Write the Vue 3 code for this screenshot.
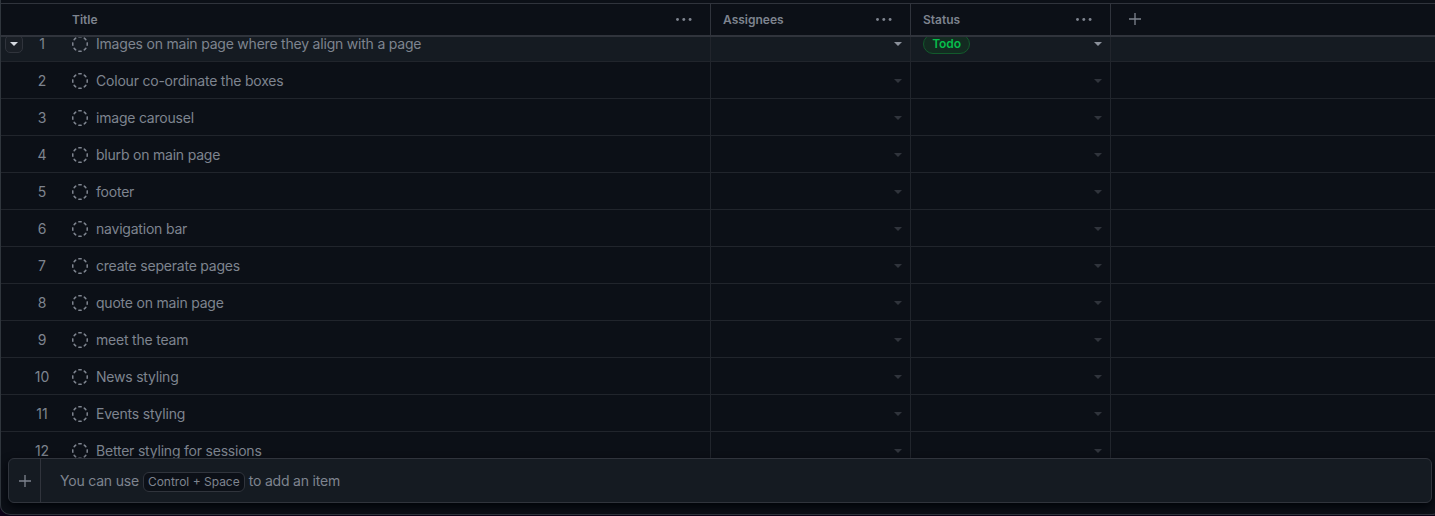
<script setup>
const titles = [
  'Images on main page where they align with a page',
  'Colour co-ordinate the boxes',
  'image carousel',
  'blurb on main page',
  'footer',
  'navigation bar',
  'create seperate pages',
  'quote on main page',
  'meet the team',
  'News styling',
  'Events styling',
  'Better styling for sessions',
]
const columns = ['Title', 'Assignees', 'Status']
</script>

<template>
  <div class="page">
    <div class="board">
      <div class="header">
        <div v-for="c in columns" :key="c" class="hcell">
          <span>{{ c }}</span>
          <svg class="dots" width="16" height="16" viewBox="0 0 16 16"><circle cx="1.5" cy="7.5" r="1.45" /><circle cx="7.8" cy="7.5" r="1.45" /><circle cx="14.1" cy="7.5" r="1.45" /></svg>
        </div>
        <div class="hadd">
          <svg class="plus" width="12" height="12" viewBox="0 0 12 12"><path d="M6 0v12M0 6h12" /></svg>
        </div>
      </div>
      <div class="body">
        <div class="rows">
          <div v-for="(t, i) in titles" :key="i" class="row" :class="{ active: i === 0 }">
            <div class="cell title">
              <span class="handle"><span v-if="i === 0" class="menu"><svg width="8" height="4" viewBox="0 0 8 4"><path d="M0 0h8L4 4z" /></svg></span></span>
              <span class="num">{{ i + 1 }}</span>
              <svg class="draft" width="16" height="16" viewBox="0 0 16 16"><path d="M14.307 11.655a.75.75 0 0 1 .165 1.048 8.05 8.05 0 0 1-1.769 1.77.75.75 0 0 1-.883-1.214 6.552 6.552 0 0 0 1.44-1.439.75.75 0 0 1 1.047-.165Zm-2.652-9.962a.75.75 0 0 1 1.048-.165 8.05 8.05 0 0 1 1.77 1.769.75.75 0 0 1-1.214.883 6.552 6.552 0 0 0-1.439-1.44.75.75 0 0 1-.165-1.047ZM6.749.097a8.074 8.074 0 0 1 2.502 0 .75.75 0 1 1-.233 1.482 6.558 6.558 0 0 0-2.036 0A.751.751 0 0 1 6.749.097ZM.955 6.125a.75.75 0 0 1 .624.857 6.558 6.558 0 0 0 0 2.036.75.75 0 1 1-1.482.233 8.074 8.074 0 0 1 0-2.502.75.75 0 0 1 .858-.624Zm14.09 0a.75.75 0 0 1 .858.624c.13.829.13 1.673 0 2.502a.75.75 0 1 1-1.482-.233 6.558 6.558 0 0 0 0-2.036.75.75 0 0 1 .624-.857Zm-8.92 8.92a.75.75 0 0 1 .857-.624 6.558 6.558 0 0 0 2.036 0 .75.75 0 1 1 .233 1.482c-.829.13-1.673.13-2.502 0a.75.75 0 0 1-.624-.858Zm-4.432-3.39a.75.75 0 0 1 1.048.165 6.552 6.552 0 0 0 1.439 1.44.751.751 0 0 1-.883 1.212 8.05 8.05 0 0 1-1.77-1.769.75.75 0 0 1 .166-1.048Zm2.652-9.962A.75.75 0 0 1 4.18 2.741a6.556 6.556 0 0 0-1.44 1.439.751.751 0 0 1-1.212-.883 8.05 8.05 0 0 1 1.769-1.77.75.75 0 0 1 1.048.166Z" /></svg>
              <span class="text">{{ t }}</span>
            </div>
            <div v-for="n in 2" :key="n" class="cell pick">
              <span v-if="i === 0 && n === 2" class="pill">Todo</span>
              <svg class="caret" width="8" height="4" viewBox="0 0 8 4"><path d="M0 0h8L4 4z" /></svg>
            </div>
          </div>
        </div>
      </div>
      <div class="omnibar">
        <div class="add"><svg class="plus" width="12" height="12" viewBox="0 0 12 12"><path d="M6 0v12M0 6h12" /></svg></div>
        <div class="hint"><span>You can use</span><kbd>Control + Space</kbd><span>to add an item</span></div>
      </div>
    </div>
  </div>
</template>

<style>
body { background: #0d0218; overflow: hidden; }
</style>

<style scoped>
.page {
  height: 516px;
  width: 1435px;
  overflow: hidden;
  font: 14px/20px Inter, "Liberation Sans", sans-serif;
  color: #7e848f;
}
.board {
  box-sizing: border-box;
  width: 1440px;
  height: 515px;
  background: #0c1017;
  border-left: 1px solid #30363d;
  border-bottom: 1px solid #30363d;
  border-radius: 0 0 8px 10px;
  padding-top: 3px;
  display: flex;
  flex-direction: column;
}
.header {
  box-sizing: border-box;
  flex: none;
  height: 34px;
  display: grid;
  grid-template-columns: 710px 200px 200px 1fr;
  border-top: 1px solid #30343c;
  border-bottom: 2px solid #30343c;
  font-size: 12px;
  font-weight: 600;
}
.hcell {
  box-sizing: border-box;
  display: flex;
  align-items: center;
  justify-content: space-between;
  border-right: 1px solid #30343c;
  padding: 1px 18px 0 12px;
}
.hcell:first-child { padding-left: 71px; }
.hadd { display: flex; align-items: center; padding: 0 0 1px 18px; }
.dots { fill: #7e848f; }
.plus { display: block; fill: none; stroke: #7e848f; stroke-width: 1.3; }
.body { flex: none; height: 422px; overflow: hidden; }
.rows { margin-top: -12px; }
.row {
  box-sizing: border-box;
  height: 37px;
  display: grid;
  grid-template-columns: 710px 200px 200px 1fr;
  border-bottom: 1px solid #21252c;
}
.active { background: #151b22; }
.cell {
  box-sizing: border-box;
  display: flex;
  align-items: center;
  border-right: 1px solid #21252c;
  padding-top: 2px;
}
.handle { width: 25px; padding-left: 4px; box-sizing: border-box; }
.menu {
  box-sizing: border-box;
  width: 18px;
  height: 18px;
  border: 1px solid #30343c;
  border-radius: 5px;
  background: #1a1f26;
  display: flex;
  align-items: center;
  justify-content: center;
}
.menu svg { fill: #d5dae1; }
.num { width: 32px; text-align: center; }
.draft { margin: 0 8px 0 14px; fill: #7e848f; }
.text { letter-spacing: -0.21px; }
.pick { padding: 2px 8px 0 12px; }
.caret { margin-left: auto; fill: #30343c; }
.active .caret { fill: #8b919b; }
.pill {
  box-sizing: border-box;
  height: 20px;
  width: 47px;
  text-align: center;
  border: 1px solid #125a2c;
  border-radius: 10px;
  background: #132b21;
  color: #06be4c;
  font-size: 12px;
  font-weight: 600;
  line-height: 17px;
  letter-spacing: -0.1px;
}
.omnibar {
  position: relative;
  box-sizing: border-box;
  flex: none;
  margin: -1px 0 0 7px;
  width: 1424px;
  height: 45px;
  display: flex;
  background: #151b22;
  border: 1px solid #30343c;
  border-radius: 6px;
  box-shadow: 0 4px 10px #010409;
}
.add {
  width: 31px;
  border-right: 1px solid #30343c;
  display: flex;
  align-items: center;
  justify-content: center;
}
.hint { display: flex; align-items: center; padding-left: 19px; letter-spacing: -0.2px; }
kbd {
  box-sizing: border-box;
  height: 20px;
  margin: 2px 4px 0;
  padding: 0 4px;
  border: 1px solid #30343c;
  border-radius: 6px;
  background: #0c1017;
  font: 12px/18px Inter, "Liberation Sans", sans-serif;
  letter-spacing: 0;
}
</style>
